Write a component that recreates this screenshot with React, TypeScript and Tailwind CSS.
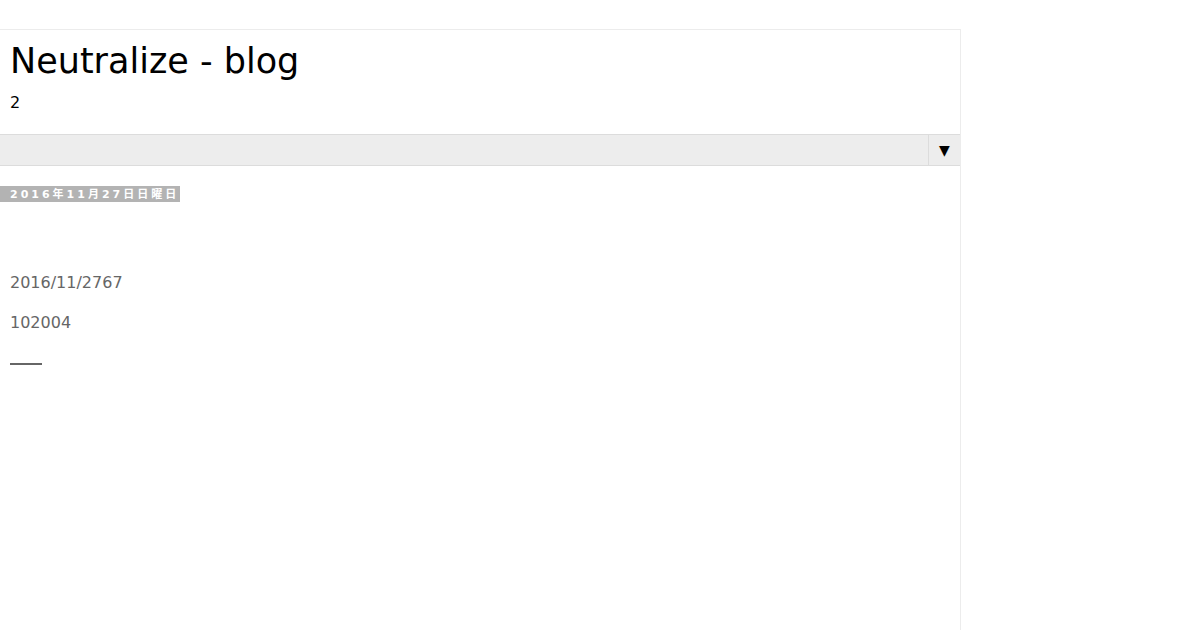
export default function App() {
  return (
    <div className="bg-white w-[1200px] h-[630px] pt-[29px] overflow-hidden font-['DejaVu_Sans','Noto_Sans_CJK_JP',sans-serif]">
      <div className="w-[961px] h-[601px] border-t border-r border-[#ececec]">
        <header className="px-[10px] pt-[10px] pb-[21px]">
          <h1 className="text-[35px] leading-[42px] text-black">Neutralize - blog</h1>
          <p className="mt-[11px] text-[16px] leading-[20px] text-black">2</p>
        </header>
        <nav className="h-[32px] flex border-y border-[#dcdcdc] bg-[#ededed]">
          <span className="flex-1"></span>
          <button className="w-[32px] border-l border-[#dcdcdc] flex items-center justify-center text-[14px] text-black">
            ▼
          </button>
        </nav>
        <div className="mt-[20px] flex">
          <span className="h-[16px] bg-[#b3b3b3] pl-[10px] pr-[1px] text-[11px] leading-[17px] font-bold tracking-[3px] text-white">
            2016年11月27日日曜日
          </span>
        </div>
        <div className="px-[10px] pt-[69px] text-[#666] text-[16px] leading-[24px]">
          <p>2016/11/2767</p>
          <p className="mt-[16px]">102004</p>
          <div className="mt-[28px] w-[32px] h-[2px] bg-[#666]"></div>
        </div>
      </div>
    </div>
  );
}
